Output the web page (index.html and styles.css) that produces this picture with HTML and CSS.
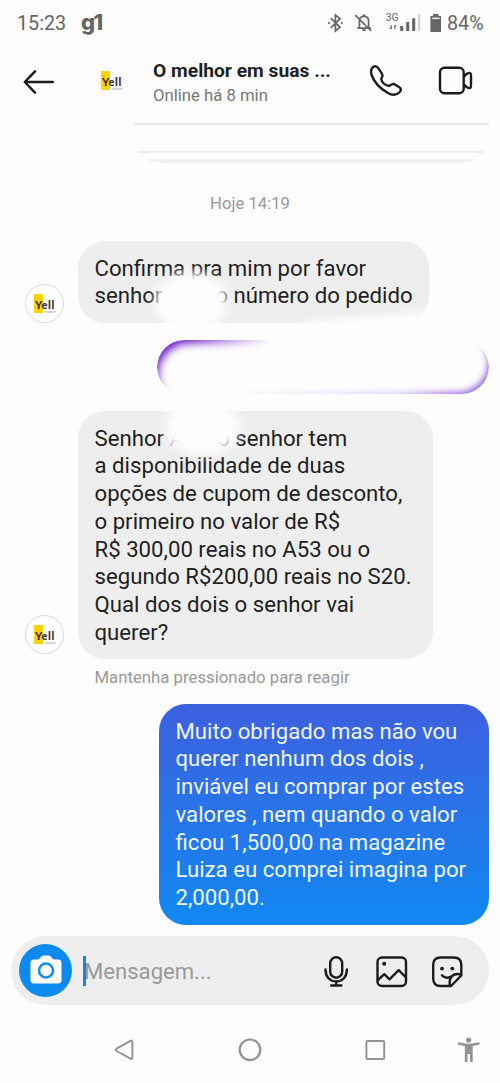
FILE: index.html
```
<!DOCTYPE html>
<html lang="pt-BR">
<head>
<meta charset="utf-8">
<title>Mensagens</title>
<link rel="stylesheet" href="styles.css">
</head>
<body>
<div class="screen">
  <div class="status">
    <span class="clock">15:23</span><span class="g1">g1</span>
    <svg class="status-icons" width="114" height="24" viewBox="326 10 114 24">
      <g fill="none" stroke="#666" stroke-width="1.700">
        <path d="M330.800 17.200 340 26.300 335.400 30V14L340 17.700 330.800 26.800"/>
        <path d="M359.400 27V20q0-4.700 4.600-4.700t4.600 4.700V27M357.200 27.200H371M355.200 14.200 371.200 30"/>
        <path stroke-width="1.100" d="M391.200 24v4M394.800 24v4M390 26.700l1.200 1.500M394.800 24l1.200 1.400"/>
      </g>
      <g fill="#666">
        <circle cx="329" cy="22" r="1.100"/><circle cx="341.800" cy="22" r="1.100"/>
        <path d="M361.800 28.300h4.400a2.200 2 0 0 1-4.400 0zM362.800 13.500h2.400v2.500h-2.400z"/>
        <path d="M400.200 25h3v5h-3zM406.200 21h3v9h-3zM412.200 17.200h3V30h-3z"/>
        <path fill="#d4d4d4" d="M417.800 13.200h2.600V30h-2.600z"/>
        <path d="M433 13h5.500v2h2.500v16h-10.600V15h2.600z"/>
      </g>
      <path d="M432.200 16.600h7.400v1.500h-7.400z" fill="#eee"/>
      <text x="385.700" y="20.300" class="net">3G</text>
    </svg>
    <span class="percent">84%</span>
  </div>

  <div class="header">
    <svg class="back" width="34" height="28" viewBox="0 0 34 28"><path d="M15 3.400 4.800 14 15 24.600M5 14H32.800" fill="none" stroke="#1c1c1c" stroke-width="2.500" stroke-linecap="round" stroke-linejoin="round"/></svg>
    <div class="avatar plain"><div class="brand"><span>Yell</span><small>mobile</small></div></div>
    <div class="who"><div class="name">O melhor em suas ...</div><div class="online">Online há 8 min</div></div>
    <svg class="phone" width="34" height="34" viewBox="369 64 34 34"><path d="M373.500 66.700C376 65.500 377 66.200 378.300 68.200L381.700 73.300C383.500 76 382 77 381.300 78.700 381 82.500 386.300 86.500 390 85.500 391.500 84.300 393 83.200 395.300 84.700L399.300 87.300C401.500 88.800 401.300 90 399.700 92 396.500 95.500 392.500 95.700 387.500 92.700 380 88.500 374.500 82.500 371.800 75.500 370.500 71.500 371.500 68 373.500 66.700Z" fill="none" stroke="#1c1c1c" stroke-width="2.400" stroke-linejoin="round"/></svg>
    <svg class="video" width="36" height="30" viewBox="438 65 36 30"><g fill="none" stroke="#1c1c1c" stroke-width="2.400" stroke-linejoin="round"><rect x="440" y="67.700" width="23.700" height="25.500" rx="4.500"/><path d="M463.700 76.500 467.300 73.500Q471 71.500 471 75.500V85.500Q471 89.500 467.300 87.500L463.700 84.500"/></g></svg>
  </div>

  <div class="remnant"><i class="bar one"></i><i class="bar two"></i><i class="bar three"></i></div>
  <div class="date">Hoje 14:19</div>

  <div class="row first">
    <div class="avatar"><div class="brand"><span>Yell</span><small>mobile</small></div></div>
    <div class="bubble in short"><p>Confirma pra mim por favor</p><p>senhor <span class="hidden">A</span>o número do pedido</p><i class="smudge s1"></i><i class="fade"></i></div>
  </div>
  <div class="row own"><div class="erased"></div></div>
  <div class="row second">
    <div class="avatar raised"><div class="brand"><span>Yell</span><small>mobile</small></div></div>
    <div class="bubble in long"><p>Senhor <span class="hidden">A</span>o senhor tem</p><p>a disponibilidade de duas</p><p>opções de cupom de desconto,</p><p>o primeiro no valor de R$</p><p>R$ 300,00 reais no A53 ou o</p><p>segundo R$200,00 reais no S20.</p><p>Qual dos dois o senhor vai</p><p>querer?</p><i class="smudge s2"></i></div>
  </div>
  <div class="hint">Mantenha pressionado para reagir</div>
  <div class="row own">
    <div class="bubble out"><p>Muito obrigado mas não vou</p><p>querer nenhum dos dois ,</p><p>inviável eu comprar por estes</p><p>valores , nem quando o valor</p><p>ficou 1,500,00 na magazine</p><p>Luiza eu comprei imagina por</p><p>2,000,00.</p></div>
  </div>

  <div class="composer">
    <div class="camera"><svg width="32" height="29" viewBox="0 0 32 29"><path d="M4 4.500H8Q9.500 4.200 10.500 2.500 11.500.5 13.500.5h5Q20.500.5 21.500 2.500 22.500 4.200 24 4.500h4q3.500 0 3.500 3.500v17q0 3.500-3.500 3.500H4Q.5 28.500.5 25V8Q.5 4.500 4 4.500z" fill="#fff"/><circle cx="16" cy="15.500" r="7" fill="none" stroke="#0d8af0" stroke-width="2.500"/></svg></div>
    <span class="caret"></span><span class="placeholder">Mensagem...</span>
    <svg class="tools" width="142" height="34" viewBox="323 953 142 34">
      <g fill="none" stroke="#1c1c1c" stroke-width="2.400" stroke-linecap="round" stroke-linejoin="round">
        <rect x="330.200" y="956.300" width="12" height="20.400" rx="6"/><path d="M325.500 968.500c0 7.500 4.300 12 10.700 12s10.700-4.500 10.700-12M336.200 980.500v4M331.200 984.500h10.200"/>
        <rect x="377.500" y="956.500" width="28.500" height="28.500" rx="4.500"/><path d="M378 979 384.300 973.200 389.500 978.300 398.700 969.200 405.500 976"/>
        <path d="M451 985H440.500Q433.200 985 433.200 977.500V964Q433.200 956.500 440.500 956.500H454Q461.300 956.500 461.300 964V974.500L451 985ZM449.800 984.500C448.700 976 453 971.500 461 973.500M442 974.300Q446 978.300 451 975.500"/>
      </g>
      <g fill="#1c1c1c"><circle cx="384.200" cy="962.800" r="2"/><circle cx="442" cy="967.600" r="1.900"/><circle cx="452.300" cy="967.600" r="1.900"/></g>
    </svg>
  </div>

  <svg class="nav" width="500" height="78" viewBox="0 1005 500 78">
    <g fill="none" stroke="#929292" stroke-width="1.900" stroke-linejoin="round"><path d="M132.400 1042v15.500q0 2-1.800 1.200L116.500 1051q-1.700-1.200 0-2.300L130.600 1040.800Q132.400 1040 132.400 1042Z"/><circle cx="250" cy="1049.800" r="10.300" stroke-width="2.200"/><rect x="366.400" y="1041" width="17.800" height="18" rx="1.300"/></g>
    <g fill="#929292"><circle cx="468.700" cy="1040" r="2.600"/><path d="M458.300 1042.300Q468.700 1045 479.200 1042.300L479.800 1044.500 472.700 1046V1062H470V1054H467.500V1062H464.800V1046L457.700 1044.500Z"/></g>
  </svg>
</div>
</body>
</html>
```
FILE: styles.css
```
* { box-sizing: border-box; }
body { margin: 0; background: #fdfdfd; font-family: Roboto, sans-serif; color: #1f1f1f; }
p { margin: 0; white-space: pre; }
svg { display: block; flex: none; }
.screen { width: 500px; height: 1083px; overflow: hidden; background: #fdfdfd; }

.status { display: flex; align-items: center; height: 44px; padding: 1px 16px 0 17px; color: #666; font-size: 19.700px; }
.clock { width: 64px; padding-top: 1px; }
.g1 { font: 800 22px/24px Inter, sans-serif; letter-spacing: -1.500px; margin-top: -2px; }
.status-icons { margin-left: auto; overflow: visible; }
.net { font-size: 10.500px; fill: #666; }
.percent { width: 37px; margin-left: 7px; padding-top: 1px; }

.header { display: flex; height: 78px; padding-left: 20px; }
.back { margin-top: 24px; }
.header .avatar { margin: 17px 0 0 38px; }
.who { width: 185px; margin-left: 22px; padding-top: 14px; white-space: nowrap; }
.name { font-size: 19.250px; font-weight: 700; line-height: 25px; }
.online { font-size: 16.700px; line-height: 25px; color: #777; }
.phone { margin: 20px 0 0 31px; }
.video { margin: 21px 0 0 35px; }

.avatar { display: flex; align-items: center; justify-content: center; flex: none; width: 39px; height: 39px; border: 1px solid #d8d8d8; border-radius: 50%; background: #fff; }
.avatar.plain { border-color: transparent; background: none; }
.brand { display: flex; flex-direction: column; width: 22px; height: 19px; padding: 4.500px 0 0 1.500px; background: linear-gradient(#fdd306, #fdd306) 0 0 / 9px 19px no-repeat; font: 900 11px/12px Lato, sans-serif; letter-spacing: .6px; color: #332536; }
.brand small { font: 3.500px/3px Roboto, sans-serif; letter-spacing: 0; color: #999; text-align: right; }

.remnant { display: flex; flex-direction: column; align-items: center; height: 69px; margin-left: 122px; }
.bar { display: block; background: #e9e9e9; }
.one { width: 355px; height: 2px; margin-top: 1px; }
.two { width: 344px; height: 2px; margin-top: 26px; background: #ededed; }
.three { width: 328px; height: 4px; margin-top: 6px; border-radius: 0 0 24px 24px / 0 0 4px 4px; background: #efefef; }
.date { height: 50px; text-align: center; font-size: 16.700px; line-height: 25px; color: #999; }

.row { display: flex; align-items: flex-end; padding-left: 25px; }
.own { justify-content: flex-end; padding-right: 11px; }
.bubble { position: relative; overflow: hidden; border-radius: 27px; padding: 13.500px 16.500px; font-size: 22.200px; line-height: 27.800px; }
.in { margin-left: 14px; background: #eee; }
.short { width: 351px; height: 82px; }
.long { width: 355px; height: 248px; }
.out { width: 330px; height: 221px; color: #eff5ff; background: linear-gradient(#3e60df, #1188f2); }
.hidden { display: inline-block; width: 47.500px; color: #aaa; }
.smudge { position: absolute; background: #fdfdfd; border-radius: 50%; filter: blur(5px); }
.s1 { left: 77px; top: 31px; width: 73px; height: 60px; }
.s2 { left: 87px; top: -12px; width: 74px; height: 56px; }
.fade { position: absolute; right: -16px; bottom: -15px; width: 140px; height: 22px; background: #fdfdfd; transform: rotate(-4deg); filter: blur(3px); }

.erased { display: grid; width: 332px; height: 54px; margin: 17px 0; border-radius: 27px; background: #fefefe; }
.erased::before, .erased::after { content: ""; grid-area: 1 / 1; border-radius: 27px; }
.erased::before { box-shadow: inset 6px 8px 8px -5px #6a18c8; -webkit-mask-image: linear-gradient(115deg, #000 10%, transparent 32%); mask-image: linear-gradient(115deg, #000 10%, transparent 32%); }
.erased::after { box-shadow: inset -4px -5px 6px -3px #9567df; -webkit-mask-image: linear-gradient(300deg, #000 9%, rgba(0,0,0,.3) 25%, transparent 75%); mask-image: linear-gradient(300deg, #000 9%, rgba(0,0,0,.3) 25%, transparent 75%); }

.raised { margin-bottom: 5px; }
.hint { height: 45px; padding: 6px 0 0 94.500px; font-size: 16.750px; line-height: 25px; color: #999; }

.composer { display: flex; align-items: center; width: 478px; height: 69px; margin: 11px 0 0 11px; padding: 0 24px 0 8px; border-radius: 35px; background: #eee; }
.camera { display: flex; align-items: center; justify-content: center; width: 53px; height: 53px; border-radius: 50%; background: #0d8af0; padding-bottom: 2px; }
.caret { width: 3px; height: 30px; margin-left: 11px; background: #1683e6; }
.placeholder { margin: 1px 0 0 -2px; font-size: 22.100px; color: #999; }
.tools { margin-left: auto; }
```
